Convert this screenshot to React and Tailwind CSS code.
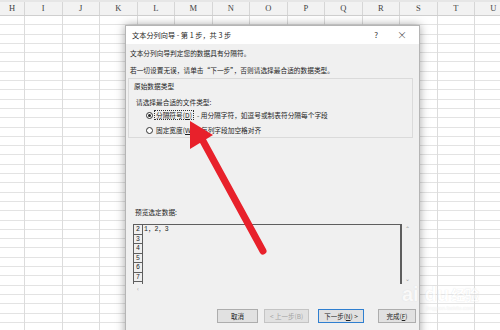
import React from 'react'

const cols = ["H", "I", "J", "K", "L", "M", "N", "O", "P", "Q", "R", "S", "T", "U"]
const rows = Array.from({ length: 34 }, (_, i) => i)

const Sheet = () => {
  return (
    <div className="w-[500px] h-[330px] bg-white overflow-hidden">
      <div className="flex h-[16px] bg-[#f2f2f2] border-t-[2px] border-t-[#e6e6e6] border-b border-b-[#cfcfcf]">
        {cols.map((c, i) => (
          <div
            key={c}
            className={`${i === 0 ? "w-[25px]" : "w-[37.5px]"} shrink-0 border-r border-[#d6d6d6] flex items-center justify-center text-[8.5px] text-[#444] font-['Liberation_Serif',serif]`}
          >
            {c}
          </div>
        ))}
      </div>
      <div className="flex">
        {cols.map((c, i) => (
          <div key={c} className={`${i === 0 ? "w-[25px]" : "w-[37.5px]"} shrink-0 border-r border-[#dcdcdc]`}>
            {rows.map((r) => (
              <div key={r} className="h-[9.3px] border-b border-[#e3e3e3]" />
            ))}
          </div>
        ))}
      </div>
    </div>
  )
}

const Btn = ({ children, w, disabled, active }) => (
  <div
    className={`${w} h-[14px] flex items-center justify-center text-[6.5px] bg-[#e1e1e1] ${
      active ? "border border-[#2f7fd0]" : disabled ? "border border-[#c4c4c4] text-[#a3a3a3]" : "border border-[#adadad] text-[#222]"
    }`}
  >
    {children}
  </div>
)

const Wizard = () => {
  return (
    <div className="absolute left-[125px] top-[25px] w-[295px] h-[315px] bg-[#f0f0f0] border border-[#b5b5b5] shadow-[0_0_9px_rgba(0,0,0,0.35)] text-[#1e1e1e] text-[6.7px] leading-[8px] font-['Noto_Sans_CJK_SC',sans-serif]">
      <div className="h-[18px] bg-white flex items-center pl-[6px] pr-[12px] text-[7.2px]">
        <span>文本分列向导 - 第 1 步，共 3 步</span>
        <span className="ml-auto text-[8px] text-[#333]">?</span>
        <span className="ml-[19px] text-[10px] font-light text-[#333]">×</span>
      </div>
      <div className="mt-[5px] pl-[4px] h-[8px]">文本分列向导判定您的数据具有分隔符。</div>
      <div className="mt-[9px] pl-[4px] h-[8px]">若一切设置无误，请单击“下一步”，否则请选择最合适的数据类型。</div>

      <div className="mt-[4px] ml-[2px] w-[285px] h-[60px] border border-[#dadada] pt-[3px] pl-[5px]">
        <div className="h-[8px]">原始数据类型</div>
        <div className="mt-[8px] ml-[2px] h-[8px]">请选择最合适的文件类型:</div>
        <div className="mt-[4px] h-[10px] flex items-center">
          <div className="ml-[12px] w-[7px] h-[7px] rounded-full border border-[#333] bg-white flex items-center justify-center">
            <div className="w-[3px] h-[3px] rounded-full bg-[#222]" />
          </div>
          <div className="ml-[1px] h-[10px] px-[1px] border border-dotted border-[#333] flex items-center">分隔符号(<span className="underline">D</span>)</div>
          <div className="ml-[3px]">- 用分隔字符，如逗号或制表符分隔每个字段</div>
        </div>
        <div className="mt-[5px] h-[10px] flex items-center">
          <div className="ml-[12px] w-[7px] h-[7px] rounded-full border border-[#333] bg-white" />
          <div className="ml-[2px] px-[1px]">固定宽度(<span className="underline">W</span>)</div>
          <div className="ml-[3px]">- 每列字段加空格对齐</div>
        </div>
      </div>

      <div className="mt-[70px] ml-[9px] h-[8px]">预览选定数据:</div>

      <div className="mt-[8px] ml-[7px] w-[280px] flex flex-col">
        <div className="flex h-[60px]">
          <div className="flex-1 border-t border-l border-r-2 border-[#5e5e5e] flex">
            <div className="w-[9px] border-r border-[#5e5e5e] flex flex-col">
              {[2, 3, 4, 5, 6, 7].map((n) => (
                <div key={n} className="h-[9.5px] border-b border-[#5e5e5e] text-[6.5px] leading-[9px] text-center font-['Liberation_Mono',monospace]">
                  {n}
                </div>
              ))}
            </div>
            <div className="pl-[1px] text-[6.5px] leading-[10px] font-['Liberation_Mono','Noto_Sans_CJK_SC',monospace]">1，2，3</div>
          </div>
          <div className="w-[11px] flex flex-col items-center justify-between py-[1px] text-[#9a9a9a] text-[6px]">
            <span>⌃</span>
            <span>⌄</span>
          </div>
        </div>
        <div className="h-[10px] flex items-center pl-[4px] text-[#9a9a9a] text-[6px]">‹</div>
      </div>

      <div className="mt-[15px] ml-[91px] flex">
        <Btn w="w-[41px]">取消</Btn>
        <div className="ml-[6px]"><Btn w="w-[45px]" disabled>&lt; 上一步(B)</Btn></div>
        <div className="ml-[9px]"><Btn w="w-[46px]" active>下一步(<span className="underline">N</span>) &gt;</Btn></div>
        <div className="ml-[14px]"><Btn w="w-[38px]">完成(<span className="underline">F</span>)</Btn></div>
      </div>
    </div>
  )
}

const Arrow = () => (
  <svg className="absolute left-0 top-0" width="500" height="330" viewBox="0 0 500 330">
    <line x1="203" y1="141" x2="263" y2="251" stroke="#e8212b" strokeWidth="7" strokeLinecap="round" />
    <polygon points="190,121 190,149 213,135" fill="#e8212b" />
  </svg>
)

const Watermark = () => (
  <div className="absolute left-[402px] top-[284px] flex flex-col items-start opacity-60">
    <div className="flex items-end font-['Liberation_Sans',sans-serif] text-[20px] leading-[20px] font-bold text-white [text-shadow:0_0_1px_#c8c8c8]">
      <span>ai</span>
      <span className="ml-[6px]">du</span>
      <span className="ml-[2px] text-[14px] font-['Noto_Sans_CJK_SC',sans-serif]">经验</span>
    </div>
    <div className="ml-[24px] text-[6px] text-white [text-shadow:0_0_1px_#c8c8c8] font-['Liberation_Sans',sans-serif]">jingyan.baidu.com</div>
  </div>
)

export default function App() {
  return (
    <div className="relative w-[500px] h-[330px] overflow-hidden">
      <Sheet />
      <Wizard />
      <Arrow />
      <Watermark />
    </div>
  )
}
